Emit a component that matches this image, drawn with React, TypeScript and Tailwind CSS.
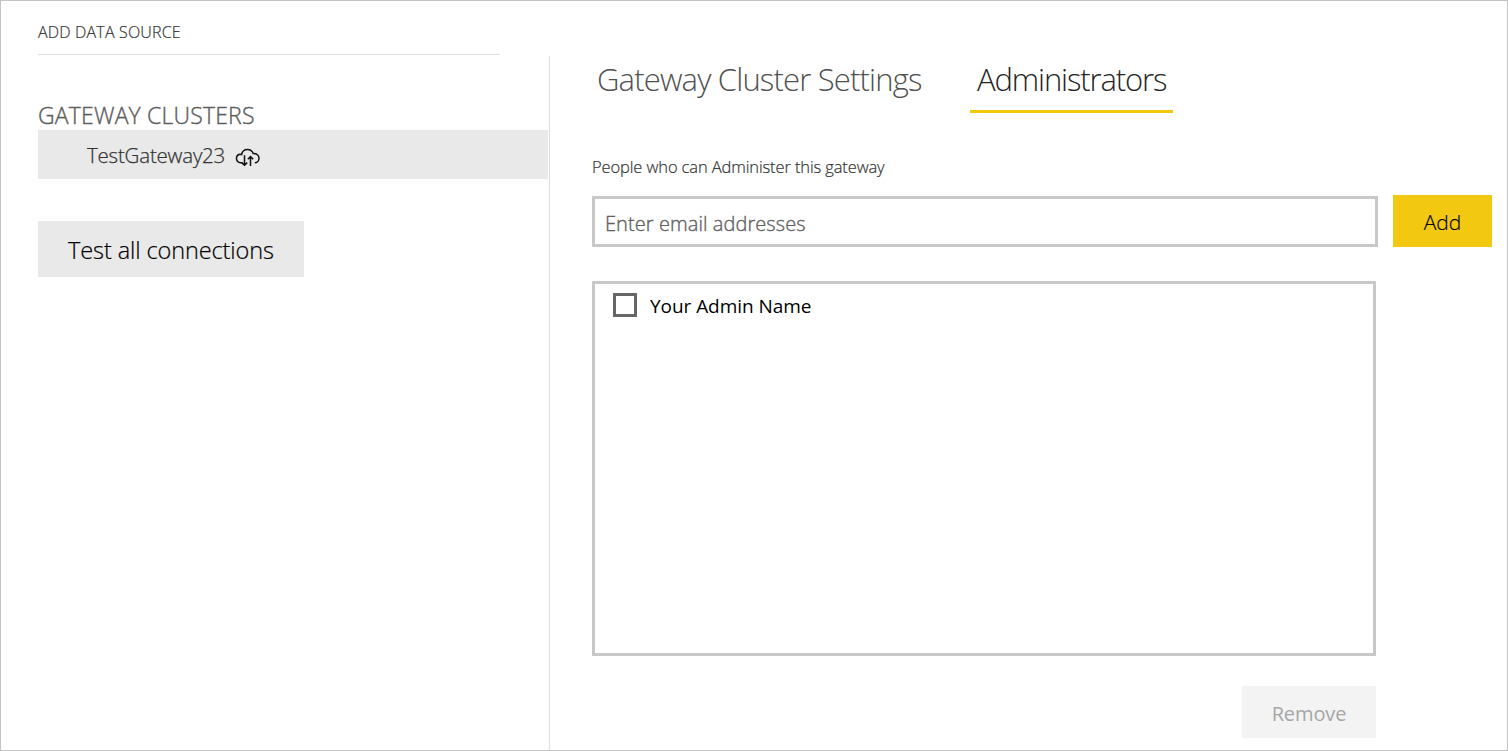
function CloudSyncIcon() {
  return (
    <svg width="26" height="20" viewBox="0 0 26 20" fill="none" stroke="#111111" strokeWidth="1.5" strokeLinejoin="miter">
      <path d="M7.2 14.7H5.6A4.3 4.3 0 0 1 4.9 6.2C5.7 6.2 6 6.3 6.6 6.5C7.2 3.3 9.4 1.4 12.4 1.4C15.4 1.4 17.5 3.2 18.3 5.6C21.6 5.3 24 7.4 24 10.2C24 12.8 22.2 14.7 19.8 14.7" />
      <path d="M9.5 7.2V17.4M6.8 14.6L9.5 17.3L12.2 14.6M15.5 18V8.6M12.8 11.2L15.5 8.5L18.2 11.2" />
    </svg>
  );
}

export default function App() {
  return (
    <div className="flex h-[751px] w-[1508px] overflow-hidden whitespace-nowrap border border-[#c3c3c3] bg-white font-['Open_Sans',sans-serif] text-[#333333]">
      <aside className="flex w-[548px] shrink-0 flex-col items-start pl-[37px]">
        <div className="flex h-[54px] w-[462px] items-start border-b border-[#dedede] pt-[19px] text-[16px] leading-6 font-light tracking-[0.18px] [-webkit-text-stroke:0.2px]">
          ADD DATA SOURCE
        </div>
        <h2 className="mt-[44px] h-[31px] text-[23px] leading-[33px] font-light tracking-[0.18px] text-[#5c5c5c] [-webkit-text-stroke:0.35px]">
          GATEWAY CLUSTERS
        </h2>
        <div className="flex h-[49px] w-[510px] items-center bg-[#e9e9e9] pl-[49px]">
          <span className="w-[148px] pt-px text-[20.5px] leading-7 font-light tracking-[-0.2px] [-webkit-text-stroke:0.25px]">TestGateway23</span>
          <span className="pt-[7px]">
            <CloudSyncIcon />
          </span>
        </div>
        <button className="mt-[42px] flex h-14 w-[266px] items-center bg-[#e9e9e9] pt-[4px] pl-[30px] text-[23.5px] font-light tracking-[-0.1px] text-black [-webkit-text-stroke:0.2px]">
          Test all connections
        </button>
      </aside>
      <main className="mt-[55px] flex grow flex-col items-start border-l border-[#dedede] pl-[42px]">
        <nav className="flex h-[57px] text-[31px] leading-[47px] font-light">
          <span className="w-[378px] pl-[5px] tracking-[-0.82px] text-[#505050]">Gateway Cluster Settings</span>
          <span className="w-[203px] border-b-[3px] border-[#f2c811] pl-[7px] tracking-[-1.13px] text-[#252525]">Administrators</span>
        </nav>
        <p className="mt-[42px] h-[41px] text-[16.5px] leading-6 font-light tracking-[-0.12px] [-webkit-text-stroke:0.2px]">
          People who can Administer this gateway
        </p>
        <div className="-mt-px flex h-[52px] items-start">
          <input
            className="mt-px h-[51px] w-[786px] border-[3px] border-[#c8c8c8] pt-[3px] pl-[10px] text-[20px] font-light tracking-[0.07px] outline-none [-webkit-text-stroke:0.35px] placeholder:text-[#606060]"
            placeholder="Enter email addresses"
          />
          <button className="ml-[15px] h-[52px] w-[99px] bg-[#f2c811] pt-[3px] text-[21px] font-light text-black [-webkit-text-stroke:0.15px]">Add</button>
        </div>
        <div className="mt-[34px] flex h-[375px] w-[784px] items-start border-[3px] border-[#c8c8c8] pt-[9px] pl-[18px]">
          <label className="flex h-6 items-center text-[19px] text-black">
            <input type="checkbox" className="h-6 w-6 appearance-none border-[3px] border-[#666666] bg-white" />
            <span className="ml-[13px] pt-[2px] tracking-[-0.05px]">Your Admin Name</span>
          </label>
        </div>
        <button disabled className="mt-[30px] ml-[650px] h-[52px] w-[134px] shrink-0 bg-[#f3f3f3] pt-[3px] text-[20px] tracking-[-0.1px] text-[#a6a6a6]">
          Remove
        </button>
      </main>
    </div>
  );
}
